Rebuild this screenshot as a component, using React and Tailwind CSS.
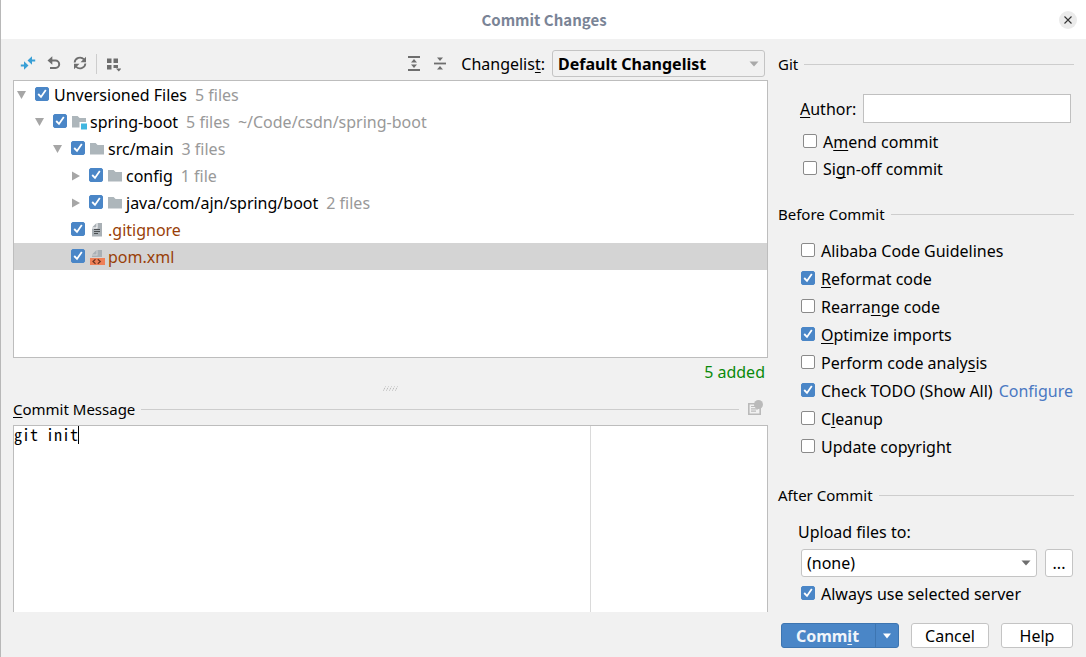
import { useState } from "react";

function Mnemonic({ text, at }) {
  if (at === undefined) return text;
  return (
    <>
      {text.slice(0, at)}
      <span className="underline decoration-1 underline-offset-2 [text-decoration-skip-ink:none]">{text[at]}</span>
      {text.slice(at + 1)}
    </>
  );
}

function Check({ id, checked, onChange, label }) {
  return (
    <span className="mb-0.5 grid size-3.5 shrink-0">
      <input
        id={id}
        type="checkbox"
        aria-label={label}
        checked={checked}
        onChange={onChange}
        className="peer col-start-1 row-start-1 size-3.5 appearance-none rounded-[2px] border border-[#8a8a8a] bg-white checked:border-[#4a86c7] checked:bg-[#4a86c7]"
      />
      <svg viewBox="0 0 14 14" className="pointer-events-none invisible col-start-1 row-start-1 size-3.5 peer-checked:visible">
        <path d="M3.200 7 6 9.900 10.800 3" fill="none" stroke="#fff" strokeWidth="1.800" />
      </svg>
    </span>
  );
}

function CheckRow({ id, text, at, initial = false, children }) {
  const [on, setOn] = useState(initial);
  return (
    <div className="flex items-center gap-1.5 whitespace-nowrap">
      <Check id={id} checked={on} onChange={() => setOn(!on)} />
      <label htmlFor={id}>
        <Mnemonic text={text} at={at} />
      </label>
      {children}
    </div>
  );
}

function SectionTitle({ text, at, id }) {
  return (
    <div className="flex flex-1 items-center gap-1.5">
      <h2 id={id} className="text-[15px] leading-5">
        <Mnemonic text={text} at={at} />
      </h2>
      <div className="h-px flex-1 bg-[#cdcdcd]" />
    </div>
  );
}

function FolderIcon({ module }) {
  return (
    <svg viewBox="0 0 16 16" className="size-4 shrink-0">
      <path d="M0 2h5.600l2 2H14v9.500H0z" fill="#adb6bb" />
      {module && <path d="M7.500 8H15v7.500H7.500z" fill="#fff" />}
      {module && <path d="M9 9.500h6v6H9z" fill="#40b6e0" />}
    </svg>
  );
}

function TextFileIcon() {
  return (
    <svg viewBox="0 0 16 16" className="size-4 shrink-0">
      <path d="M6.500 1v4.500H2z" fill="#a9b0b5" />
      <path d="M7.500 1H12v13.500H2V6.500h5.500z" fill="#a9b0b5" />
      <path d="M4 7h6v1H4zM4 9h6v1H4zM4 11h4v1H4z" fill="#4a4e51" />
    </svg>
  );
}

function XmlFileIcon() {
  return (
    <svg viewBox="0 0 16 16" className="size-4 shrink-0">
      <path d="M6.500 1v4.500H2z" fill="#a9b0b5" />
      <path d="M7.500 1H12v7H2V6.500h5.500z" fill="#a9b0b5" />
      <path d="M0 9h15v7H0z" fill="#ee8058" />
      <path d="M5.500 10.300 3 12.500 5.500 14.700M7.800 10.300l2.500 2.200-2.500 2.200" fill="none" stroke="#6b3420" strokeWidth="1.200" />
    </svg>
  );
}

const icons = {
  module: <FolderIcon module />,
  folder: <FolderIcon />,
  text: <TextFileIcon />,
  xml: <XmlFileIcon />,
};

const tree = [
  { name: "Unversioned Files", note: "5 files", indent: "pl-1", arrow: "open" },
  { name: "spring-boot", note: "5 files", path: "~/Code/csdn/spring-boot", indent: "pl-[22px]", arrow: "open", icon: "module" },
  { name: "src/main", note: "3 files", indent: "pl-10", arrow: "open", icon: "folder" },
  { name: "config", note: "1 file", indent: "pl-[58px]", arrow: "closed", icon: "folder" },
  { name: "java/com/ajn/spring/boot", note: "2 files", indent: "pl-[58px]", arrow: "closed", icon: "folder" },
  { name: ".gitignore", indent: "pl-10", icon: "text", fresh: true },
  { name: "pom.xml", indent: "pl-10", icon: "xml", fresh: true, selected: true },
];

function TreeRow({ item, index }) {
  const [on, setOn] = useState(true);
  const id = "file-" + index;
  return (
    <li className={"flex h-[27px] items-center whitespace-nowrap " + item.indent + (item.selected ? " bg-[#d4d4d4]" : "")}>
      {item.arrow ? (
        <button type="button" aria-label={"Toggle " + item.name} className="mr-[9px] size-2 shrink-0">
          <svg viewBox="0 0 8 8" className="size-2 overflow-visible">
            <path d={item.arrow === "open" ? "M-1 0h9L3.500 8z" : "M0-.5v9L8 4z"} fill="#a6a6a6" />
          </svg>
        </button>
      ) : (
        <span className="w-[17px] shrink-0" />
      )}
      <Check id={id} checked={on} onChange={() => setOn(!on)} />
      <label htmlFor={id} className="ml-[5px] flex items-center">
        {item.icon && <span className="mr-0.5">{icons[item.icon]}</span>}
        <span className={item.fresh ? "text-[#993f08]" : ""}>{item.name}</span>
      </label>
      {item.note && <span className="ml-2 text-[#999]">{item.note}</span>}
      {item.path && <span className="ml-2 text-[#999]">{item.path}</span>}
    </li>
  );
}

function Tool({ label, children }) {
  return (
    <button type="button" aria-label={label} className="size-4">
      <svg viewBox="0 0 16 16" className="size-4" fill="none" stroke="#6e6e6e">
        {children}
      </svg>
    </button>
  );
}

function Dropdown({ id, options, className, arrow }) {
  return (
    <div className="grid flex-1 items-center">
      <select id={id} className={"col-start-1 row-start-1 w-full appearance-none rounded-[3px] border border-[#c4c4c4] px-[5px] " + className}>
        {options.map((o) => (
          <option key={o}>{o}</option>
        ))}
      </select>
      <svg viewBox="0 0 10 6" className="pointer-events-none col-start-1 row-start-1 mr-1.5 h-1.5 w-2.5 justify-self-end">
        <path d="M.5.5h9L5 5.500z" fill={arrow} />
      </svg>
    </div>
  );
}

const before = [
  { text: "Alibaba Code Guidelines" },
  { text: "Reformat code", at: 0, initial: true },
  { text: "Rearrange code", at: 6 },
  { text: "Optimize imports", at: 0, initial: true },
  { text: "Perform code analysis", at: 18 },
  { text: "Check TODO (Show All)", initial: true, link: "Configure" },
  { text: "Cleanup", at: 1 },
  { text: "Update copyright" },
];

export default function App() {
  return (
    <div className="flex min-h-screen flex-col border-l border-[#b8b8b8] bg-[#f1f1f1] font-['Noto_Sans',sans-serif] text-base leading-[22px] text-black">
      <header className="flex h-[39px] items-center bg-white pr-[9px] pl-7">
        <h1 className="flex-1 text-center font-['Noto_Sans_CJK_SC',sans-serif] text-[15px] leading-5 font-bold text-[#7a8496]">Commit Changes</h1>
        <button type="button" aria-label="Close" className="flex size-[18px] items-center justify-center rounded-full bg-[#ebebeb]">
          <svg viewBox="0 0 8 8" className="size-2">
            <path d="M.5.5l7 7m0-7-7 7" stroke="#333" strokeWidth="1.100" />
          </svg>
        </button>
      </header>

      <main className="flex flex-1 gap-2.5 pr-3 pl-3">
        <div className="flex min-w-0 flex-1 flex-col pb-[45px]">
          <div className="mt-[11px] flex h-[27px] items-center pr-[3px] pl-[7px]">
            <div className="flex items-center gap-2.5 pb-0.5">
              <Tool label="Show diff">
                <path d="M15.200 5.500H11M.8 10.500H5" stroke="#389fd6" strokeWidth="2" />
                <path d="M7.500 5.500 12 1.200v8.600zM8.500 10.500 4 6.200v8.600z" fill="#389fd6" stroke="none" />
              </Tool>
              <Tool label="Revert">
                <path d="M4 5.500h5.500a3.700 3.700 0 0 1 0 7.400H4" strokeWidth="2" />
                <path d="M6.300 1.200v8.600L1.500 5.500z" fill="#6e6e6e" stroke="none" />
              </Tool>
              <Tool label="Refresh">
                <path d="M2.600 7.500A5.400 5.400 0 0 1 12 4.400M13.400 8.500A5.400 5.400 0 0 1 4 11.600" strokeWidth="1.800" />
                <path d="M14 1.700v5.500H8.500zM2 14.300V8.800h5.500z" fill="#6e6e6e" stroke="none" />
              </Tool>
            </div>
            <div className="mx-2 h-5 w-px bg-[#cdcdcd]" />
            <Tool label="Group by">
              <path d="M2 2.500h4.500V7H2zM8.500 2.500H13V7H8.500zM2 9h4.500v4.500H2zM8.500 9H13v3H8.500z" fill="#6e6e6e" stroke="none" />
              <path d="M11 12.500h5.500l-2.700 3z" fill="#6e6e6e" stroke="none" />
            </Tool>
            <div className="ml-auto flex items-center gap-2.5 pb-0.5">
              <Tool label="Expand all">
                <path d="M2 2h12M2 15h12" strokeWidth="1.800" />
                <path d="M8 4 11 7.500H5zM8 13 11 9.500H5z" fill="#6e6e6e" stroke="none" />
              </Tool>
              <Tool label="Collapse all">
                <path d="M2 8.500h12" strokeWidth="1.800" />
                <path d="M8 6 11 2.500H5zM8 11 11 14.500H5z" fill="#6e6e6e" stroke="none" />
              </Tool>
            </div>
            <label htmlFor="changelist" className="mr-[7px] ml-[13px]">
              <Mnemonic text="Changelist:" at={9} />
            </label>
            <div className="flex w-[213px]">
              <Dropdown id="changelist" options={["Default Changelist"]} className="h-[27px] bg-[#f1f1f1] font-bold" arrow="#a9a9a9" />
            </div>
          </div>

          <ul className="mt-[3px] min-h-[278px] border border-[#bdbdbd] bg-white">
            {tree.map((item, i) => (
              <TreeRow key={item.name} item={item} index={i} />
            ))}
          </ul>
          <p className="mt-[3px] pr-[3px] text-right text-[#0a8a0a]">5 added</p>
          <svg viewBox="0 0 16 5" className="mt-[3px] h-[5px] w-4 self-center">
            <path d="M.5 4.500l2-4M3.500 4.500l2-4M6.500 4.500l2-4M9.500 4.500l2-4M12.500 4.500l2-4" stroke="#a8a8a8" strokeWidth="1" strokeDasharray="1 1" />
          </svg>
          <div className="mt-2 flex items-center gap-2">
            <SectionTitle id="message-title" text="Commit Message" at={0} />
            <button type="button" aria-label="Message history" className="mr-[5px] mb-0.5 size-4">
              <svg viewBox="0 0 16 16" className="size-4">
                <path d="M1.800 3.800h11.400v10.400H1.800z" fill="none" stroke="#bababa" strokeWidth="1.600" />
                <path d="M4 6.500h5M4 8.800h7M4 11.200h5" stroke="#bababa" strokeWidth="1.200" />
                <circle cx="11.500" cy="4.500" r="4.500" fill="#bababa" />
              </svg>
            </button>
          </div>
          <div className="mt-1.5 grid flex-1 border border-b-0 border-[#bdbdbd] bg-white">
            <textarea
              aria-labelledby="message-title"
              defaultValue="git init"
              className="col-start-1 row-start-1 h-full w-full resize-none font-['Noto_Sans_Mono_CJK_SC','Liberation_Mono',monospace] text-base leading-4 outline-none"
            />
            <div className="pointer-events-none col-start-1 row-start-1 w-[577px] border-r border-[#dadada]">
              <div className="ml-16 h-[18px] w-px bg-black" />
            </div>
          </div>
        </div>

        <aside className="flex w-[296px] shrink-0 flex-col pt-[15px] pb-[9px]">
          <div className="flex">
            <SectionTitle text="Git" />
          </div>
          <div className="mt-5 flex items-center gap-[7px] pr-[3px] pl-[22px]">
            <label htmlFor="author">
              <Mnemonic text="Author:" at={0} />
            </label>
            <input id="author" type="text" className="h-[29px] min-w-0 flex-1 border border-[#c0c0c0] bg-white px-1.5 outline-none" />
          </div>
          <div className="mt-2 flex flex-col gap-[5px] pl-[25px]">
            <CheckRow id="amend" text="Amend commit" at={1} />
            <CheckRow id="signoff" text="Sign-off commit" at={2} />
          </div>

          <div className="mt-6 flex">
            <SectionTitle text="Before Commit" />
          </div>
          <div className="mt-4 flex flex-col gap-1.5 pl-[23px]">
            {before.map((b, i) => (
              <CheckRow key={b.text} id={"before-" + i} text={b.text} at={b.at} initial={b.initial}>
                {b.link && (
                  <a href="#configure" className="text-[#4a78c2]">
                    {b.link}
                  </a>
                )}
              </CheckRow>
            ))}
          </div>

          <div className="mt-[27px] flex">
            <SectionTitle text="After Commit" />
          </div>
          <label htmlFor="server" className="mt-4 pl-5">
            Upload files to:
          </label>
          <div className="mt-1.5 flex gap-2 pr-px pl-[23px]">
            <Dropdown id="server" options={["(none)"]} className="h-7 bg-white" arrow="#6e6e6e" />
            <button type="button" aria-label="Browse servers" className="h-7 w-7 rounded-[3px] border border-[#c4c4c4] bg-white">
              ...
            </button>
          </div>
          <div className="mt-1.5 pl-[23px]">
            <CheckRow id="always" text="Always use selected server" initial />
          </div>

          <div className="mt-auto flex gap-3 pr-px pl-[3px]">
            <div className="flex h-[25px] flex-1 overflow-hidden rounded-[3px] border border-[#3d75b1] bg-[#4a86c7] text-[#f0f5fa]">
              <button type="button" className="flex-1 pr-0.5 font-bold">
                <Mnemonic text="Commit" at={4} />
              </button>
              <button type="button" aria-label="More commit actions" className="flex w-[23px] items-center justify-center border-l border-[#3d75b1]">
                <svg viewBox="0 0 8 6" className="h-1.5 w-2">
                  <path d="M0 .5h8L4 5.500z" fill="#fff" />
                </svg>
              </button>
            </div>
            <button type="button" className="h-[25px] w-[78px] rounded-[3px] border border-[#c4c4c4] bg-white">
              Cancel
            </button>
            <button type="button" className="h-[25px] w-[72px] rounded-[3px] border border-[#c4c4c4] bg-white">
              Help
            </button>
          </div>
        </aside>
      </main>
    </div>
  );
}
